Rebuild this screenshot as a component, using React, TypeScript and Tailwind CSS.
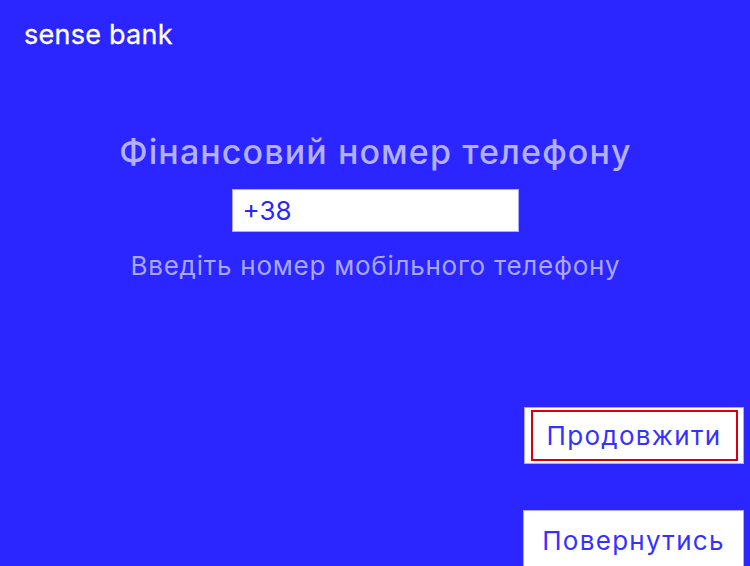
export default function App() {
  return (
    <div className="flex h-[566px] w-[750px] flex-col overflow-hidden bg-[#2b25ff] font-['Inter',sans-serif]">
      <div className="pl-[24px] pt-[18px] text-[27px] leading-[34px] tracking-[0.25px] text-white [-webkit-text-stroke:0.3px_white]">sense bank</div>
      <div className="mt-[81px] flex flex-col items-center">
        <h1 className="pl-[1px] text-[34px] font-medium leading-[38px] tracking-[1.1px] text-[#b3b1ff]">Фінансовий номер телефону</h1>
        <div className="mt-[18px] flex h-[43px] w-[287px] items-center border border-[#aaa8ff] bg-white pb-[1px] pl-[10px] text-[26px] text-[#2b25ff]">+38</div>
        <p className="mt-[14px] pl-[1px] text-[26px] leading-[40px] tracking-[0.75px] text-[#a9a7ff]">Введіть номер мобільного телефону</p>
      </div>
      <div className="mt-[121px] flex flex-col items-end pr-[6px]">
        <button className="flex h-[57px] w-[220px] items-center justify-center border border-[#aaa8ff] bg-white">
          <span className="flex h-[51px] w-[207px] items-center justify-center border-2 border-[#d6000f] pb-[1px] text-[26px] tracking-[1.3px] text-[#3532ff]">Продовжити</span>
        </button>
        <button className="mt-[46px] flex h-[60px] w-[221px] shrink-0 items-center justify-center border border-[#aaa8ff] bg-white text-[26px] tracking-[1.3px] text-[#3532ff]">Повернутись</button>
      </div>
    </div>
  );
}
